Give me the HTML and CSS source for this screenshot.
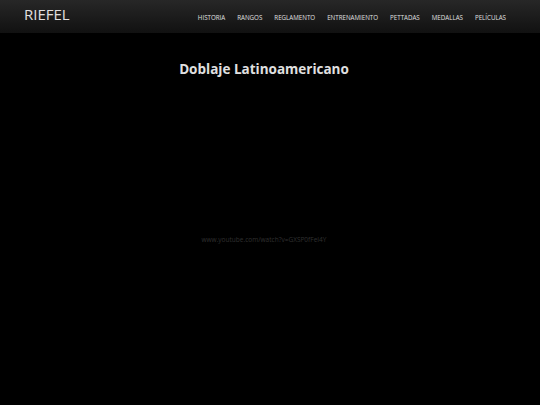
FILE: index.html
```html
<!DOCTYPE html>
<html lang="es">
<head>
<meta charset="utf-8">
<title>Riefel</title>
<link rel="stylesheet" href="styles.css">
</head>
<body>
<header class="topbar">
  <div class="brand">RIEFEL</div>
  <nav class="nav">
    <a href="#">HISTORIA</a>
    <a href="#">RANGOS</a>
    <a href="#">REGLAMENTO</a>
    <a href="#">ENTRENAMIENTO</a>
    <a href="#">PETTADAS</a>
    <a href="#">MEDALLAS</a>
    <a href="#">PELÍCULAS</a>
  </nav>
</header>
<main class="content">
  <h1 class="title">Doblaje Latinoamericano</h1>
  <p class="link">www.youtube.com/watch?v=GXSP0fFeI4Y</p>
</main>
</body>
</html>
```
FILE: styles.css
```css
html, body {
  margin: 0;
  padding: 0;
  background: #000;
  font-family: "Open Sans", "Liberation Sans", sans-serif;
}
.topbar {
  height: 33px;
  background: linear-gradient(#272727, #111111);
  display: flex;
  align-items: center;
  justify-content: space-between;
  padding: 0 34px 0 24px;
  box-sizing: border-box;
}
.brand {
  color: #e0e0e0;
  font-size: 15px;
  margin-top: -6px;
}
.nav {
  display: flex;
  gap: 12px;
  margin-top: 1px;
}
.nav a {
  color: #e0e0e0;
  text-decoration: none;
  font-size: 6.2px;
  font-weight: 400;
}
.content {
  text-align: center;
  padding-right: 12px;
}
.title {
  color: #e0e0e0;
  font-size: 13.5px;
  font-weight: 700;
  margin: 27px 0 0;
}
.link {
  color: #303030;
  font-size: 6.5px;
  margin: 157px 0 0;
}
```
